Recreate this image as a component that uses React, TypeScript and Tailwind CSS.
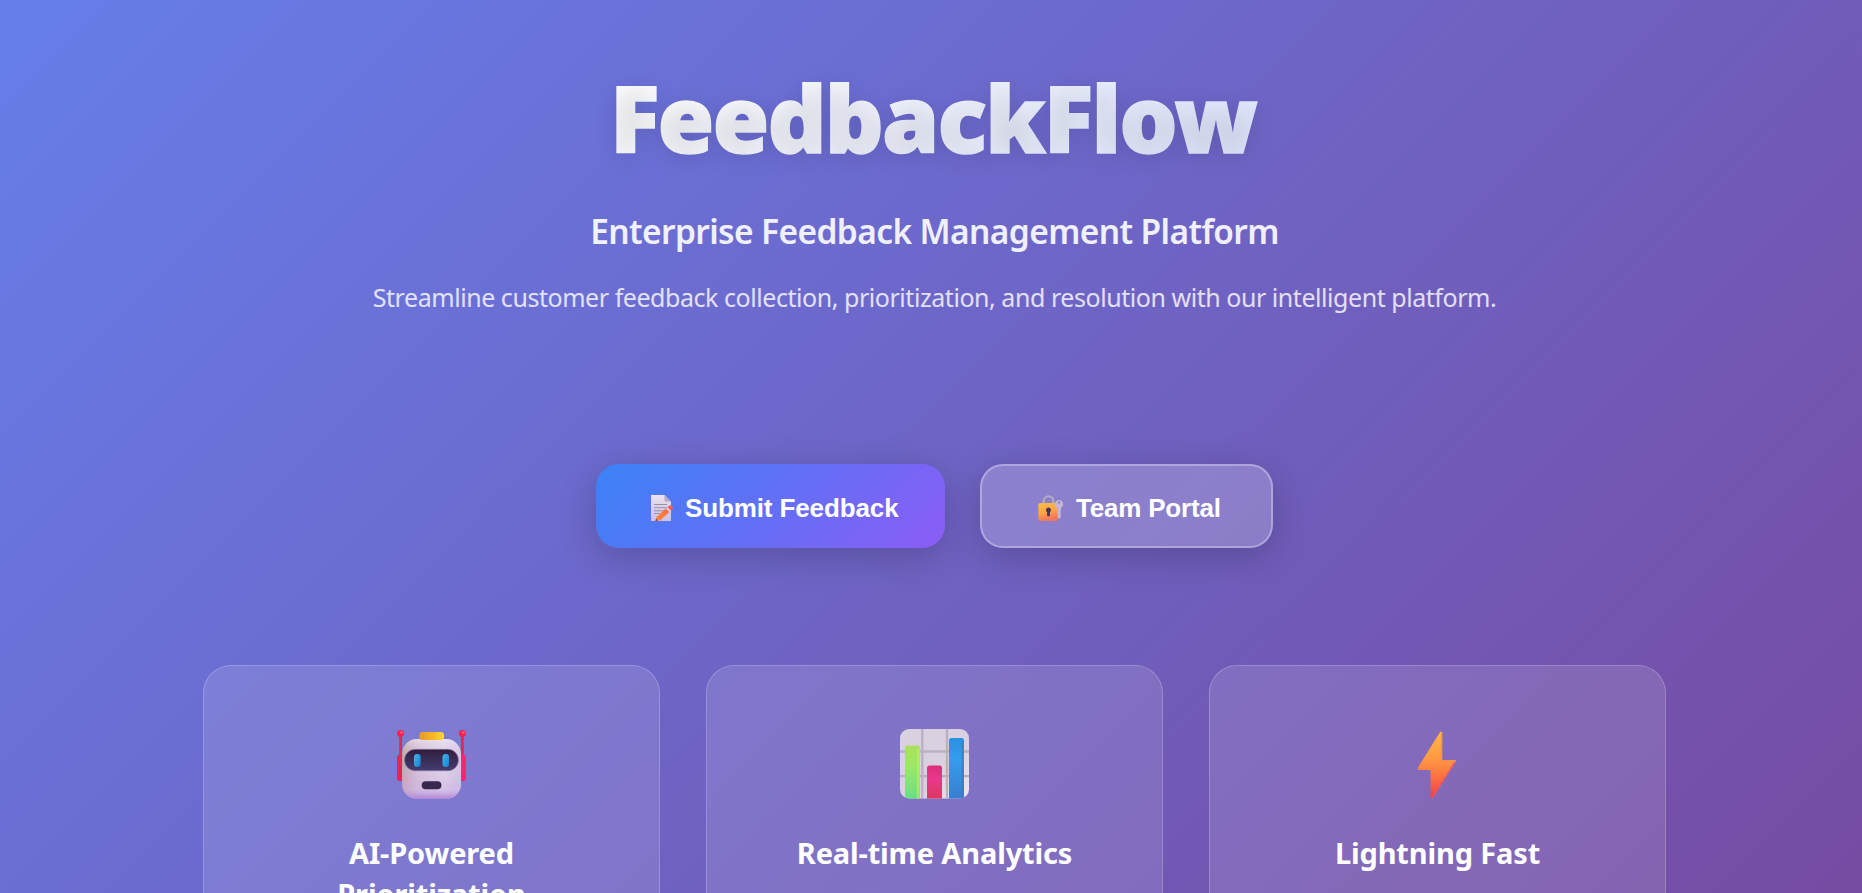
import type { ReactNode } from "react";

function MemoIcon() {
  return (
    <svg className="h-[30px] w-[30px] shrink-0" viewBox="0 0 30 30">
      <defs>
        <linearGradient id="paper" x1="0" y1="0" x2="0" y2="1"><stop offset="0" stopColor="#e9e2ef" /><stop offset="1" stopColor="#cdbfe0" /></linearGradient>
        <linearGradient id="pencil" x1="0" y1="1" x2="1" y2="0"><stop offset="0" stopColor="#ff8a3c" /><stop offset="1" stopColor="#f9683c" /></linearGradient>
      </defs>
      <path d="M4 2h13.500l6.500 6.500V28H4z" fill="url(#paper)" />
      <path d="M17.500 2v5q0 1.500 1.500 1.500h5z" fill="#b5a8c4" />
      <path d="M7 11.500h13M7 14.700h13M7 17.800h10M7 20.500h6" stroke="#9a90ab" strokeWidth="1" />
      <path d="M8.500 28l1-4 10-9 3.500 3.500-10 9z" fill="url(#pencil)" />
      <path d="M8.500 28l.500-2.300 1.800 1.900z" fill="#5b3a55" />
      <path d="M19 15.500l1.500-1.300 3.400 3.500-1.500 1.300z" fill="#e3dcec" />
      <path d="M20.500 14.200l1.700-1.500q1.300-1 2.500.2l.9 1q1 1.200-.2 2.300l-1.500 1.500z" fill="#fb5b52" />
    </svg>
  );
}

function LockIcon() {
  return (
    <svg className="h-[30px] w-[30px] shrink-0" viewBox="0 0 30 30">
      <defs>
        <linearGradient id="lock" x1="0" y1="0" x2=".3" y2="1"><stop offset="0" stopColor="#fbc04a" /><stop offset=".55" stopColor="#fba443" /><stop offset="1" stopColor="#f2745a" /></linearGradient>
      </defs>
      <path d="M7.700 11V8a4.800 4.800 0 0 1 9.600 0V11" fill="none" stroke="#b6adb9" strokeWidth="2" />
      <rect x="2.300" y="10" width="20" height="18" rx="2.200" fill="url(#lock)" />
      <path d="M12.500 14.500a2.600 2.600 0 0 1 1.400 4.700V22a1.400 1.400 0 0 1-2.800 0v-2.800a2.600 2.600 0 0 1 1.400-4.700z" fill="#46324f" />
      <path fillRule="evenodd" d="M23 7a4.200 4.200 0 0 1 2 7.800v2.700l-.6 1 .6 1.200-.6 1.300.6 1.300v1.200L23.300 26l-1.800-1.700v-9.200A4.200 4.200 0 0 1 23 7zm0 1.300a1.200 1.200 0 1 0 0 2.400 1.200 1.200 0 0 0 0-2.400z" fill="#c3b5d8" />
    </svg>
  );
}

function RobotIcon() {
  return (
    <svg className="h-[74px] w-[74px]" viewBox="2 0 74 74">
      <defs>
        <linearGradient id="face" x1="0" y1="0" x2="1" y2="0"><stop offset="0" stopColor="#c3a0aa" /><stop offset=".25" stopColor="#d5c1d7" /><stop offset=".7" stopColor="#e3d9ea" /><stop offset="1" stopColor="#d6c6e4" /></linearGradient>
        <linearGradient id="chin" x1="0" y1="0" x2="0" y2="1"><stop offset="0" stopColor="#f3edf5" stopOpacity=".5" /><stop offset=".3" stopColor="#d0bae2" stopOpacity="0" /><stop offset=".85" stopColor="#c5abe2" stopOpacity=".5" /><stop offset="1" stopColor="#b182d8" /></linearGradient>
        <linearGradient id="visor" x1="0" y1="0" x2="0" y2="1"><stop offset="0" stopColor="#301c3e" /><stop offset="1" stopColor="#443d70" /></linearGradient>
        <linearGradient id="eye" x1="0" y1="0" x2="1" y2="1"><stop offset="0" stopColor="#3fb6ef" /><stop offset="1" stopColor="#1681cf" /></linearGradient>
        <linearGradient id="hat" x1="0" y1="0" x2="1" y2="0"><stop offset="0" stopColor="#e69a28" /><stop offset=".6" stopColor="#f5b927" /><stop offset="1" stopColor="#ffd83b" /></linearGradient>
      </defs>
      <path d="M7.600 6v24M69.400 6v24" stroke="#e0265a" strokeWidth="2.700" />
      <circle cx="7.500" cy="5.500" r="3.500" fill="#ee2452" /><circle cx="69.400" cy="5.500" r="3.500" fill="#ee2452" />
      <circle cx="8.500" cy="4.500" r="1.300" fill="#ff5b6b" /><circle cx="70.400" cy="4.500" r="1.300" fill="#ff5b6b" />
      <rect x="4" y="26.500" width="8" height="26.500" rx="3" fill="#e62458" />
      <rect x="65" y="26.500" width="8" height="26.500" rx="3" fill="#ff247b" />
      <rect x="9" y="11" width="59" height="60" rx="15" fill="url(#face)" />
      <rect x="9" y="11" width="59" height="60" rx="15" fill="url(#chin)" />
      <rect x="26.300" y="4" width="24.700" height="8" rx="3.500" fill="url(#hat)" />
      <rect x="11.500" y="21.300" width="54" height="21.500" rx="10.700" fill="url(#visor)" stroke="#8f7fa5" strokeWidth=".6" />
      <rect x="21" y="26" width="6.600" height="13" rx="3.300" fill="url(#eye)" />
      <rect x="49.500" y="26" width="6.600" height="13" rx="3.300" fill="url(#eye)" />
      <rect x="28.700" y="53.200" width="19.700" height="8" rx="4" fill="#38284f" />
    </svg>
  );
}

function ChartIcon() {
  return (
    <svg className="h-[74px] w-[74px]" viewBox="1 1 74 74">
      <defs>
        <linearGradient id="board" x1="0" y1="0" x2="1" y2="1"><stop offset="0" stopColor="#d9d2df" /><stop offset=".6" stopColor="#d9d0e1" /><stop offset="1" stopColor="#eee9f2" /></linearGradient>
        <linearGradient id="green" x1="0" y1="0" x2="0" y2="1"><stop offset="0" stopColor="#abe05d" /><stop offset=".4" stopColor="#9be866" /><stop offset="1" stopColor="#69dd88" /></linearGradient>
        <linearGradient id="pink" x1="0" y1="0" x2="0" y2="1"><stop offset="0" stopColor="#dc2f7b" /><stop offset=".4" stopColor="#ed368c" /><stop offset="1" stopColor="#db3760" /></linearGradient>
        <linearGradient id="blue" x1="0" y1="0" x2="0" y2="1"><stop offset="0" stopColor="#2b91df" /><stop offset=".35" stopColor="#349df0" /><stop offset="1" stopColor="#3a7dcd" /></linearGradient>
        <clipPath id="boardClip"><rect x="3" y="2" width="69" height="69.500" rx="9" /></clipPath>
      </defs>
      <g clipPath="url(#boardClip)">
        <path d="M0 0h74v74H0z" fill="url(#board)" />
        <path d="M25.300 2v70M50 2v70M3 24.500h69M3 49.200h69" stroke="#b9b0c5" strokeWidth="2.300" />
        <path d="M8 72V21q0-2.500 2.500-2.500h10q2.500 0 2.500 2.500v51z" fill="url(#green)" />
        <path d="M20 72V22h2.500v50z" fill="#b6ef60" opacity=".7" />
        <path d="M30 72V41q0-2.500 2.500-2.500h10q2.500 0 2.500 2.500v31z" fill="url(#pink)" />
        <path d="M52 72V13.500q0-2.500 2.500-2.500h10q2.500 0 2.500 2.500V72z" fill="url(#blue)" />
        <path d="M64.500 72V14h2.200v58z" fill="#3976c0" opacity=".6" />
      </g>
    </svg>
  );
}

function BoltIcon() {
  return (
    <svg className="h-[74px] w-[74px]" viewBox="-1.5 0 74 74">
      <defs>
        <linearGradient id="bolt" x1="0" y1="0" x2="0" y2="1"><stop offset="0" stopColor="#fdb544" /><stop offset=".4" stopColor="#ff9a42" /><stop offset=".7" stopColor="#fb6d42" /><stop offset="1" stopColor="#ee3e4c" /></linearGradient>
      </defs>
      <path d="M37.300 4.500Q38 3.500 39.700 4V32H52.500Q54 32.200 53 34L30.500 69Q29.500 70.500 28 70V42H16.500Q14.300 41.500 15.500 39.500Z" fill="url(#bolt)" />
      <path d="M38.600 5V32.500h1.400V4.500zM40 32.500h12.500v1H40z" fill="#dd8c55" opacity=".6" />
      <path d="M52.500 34L30 69.500" stroke="#f2555f" strokeWidth="1.200" />
    </svg>
  );
}

function Card({ icon, children }: { icon: ReactNode; children: ReactNode }) {
  return (
    <article className="flex h-[420px] w-[457px] flex-col items-center rounded-[28px] border border-white/20 bg-[#ffffff1f] pt-[62px] text-center">
      {icon}
      <h3 className="mt-[30px] font-['Noto_Sans'] text-[29px] leading-[41px] font-bold tracking-[-0.15px] text-white">{children}</h3>
    </article>
  );
}

export default function App() {
  return (
    <main className="h-[893px] overflow-hidden bg-[linear-gradient(135deg,#667eea_0%,#764ba2_100%)] pl-[7px] font-['Noto_Sans',sans-serif] text-white">
      <header className="flex h-[464px] flex-col items-center whitespace-nowrap">
        <h1 className="mt-[58px] bg-[linear-gradient(135deg,#ffffff_0%,#e0e7ff_100%)] bg-clip-text pr-[3px] text-[92px] leading-[120px] font-black tracking-[-1.9px] text-transparent [-webkit-text-stroke:1.500px_transparent] [text-shadow:0_5px_23px_rgba(0,0,0,0.12)]">FeedbackFlow</h1>
        <h2 className="mt-[29px] text-[33.500px] leading-[48px] font-semibold tracking-[-0.61px] text-white/90">Enterprise Feedback Management Platform</h2>
        <p className="mt-[21px] text-[25px] leading-[42px] tracking-[-0.45px] text-white/80">Streamline customer feedback collection, prioritization, and resolution with our intelligent platform.</p>
      </header>
      <div className="flex justify-center gap-[35px] font-['Liberation_Sans'] text-[26px] font-bold">
        <button className="flex h-[84px] w-[349px] items-center gap-[8px] rounded-[23px] bg-[linear-gradient(135deg,#3b82f6_0%,#8b5cf6_100%)] pt-[4px] pl-[51px] tracking-[-0.12px] shadow-[0_9px_37px_rgba(0,0,0,0.2)]"><MemoIcon /><span className="whitespace-nowrap">Submit Feedback</span></button>
        <button className="flex h-[84px] w-[293px] items-center gap-[10px] rounded-[23px] border-2 border-white/30 bg-white/20 pt-[4px] pl-[54px] tracking-[-0.2px] shadow-[0_9px_37px_rgba(0,0,0,0.2)]"><LockIcon /><span className="whitespace-nowrap">Team Portal</span></button>
      </div>
      <section className="mt-[117px] flex justify-center gap-[46px]">
        <Card icon={<RobotIcon />}>AI-Powered<br />Prioritization</Card>
        <Card icon={<ChartIcon />}>Real-time Analytics</Card>
        <Card icon={<BoltIcon />}>Lightning Fast</Card>
      </section>
    </main>
  );
}
